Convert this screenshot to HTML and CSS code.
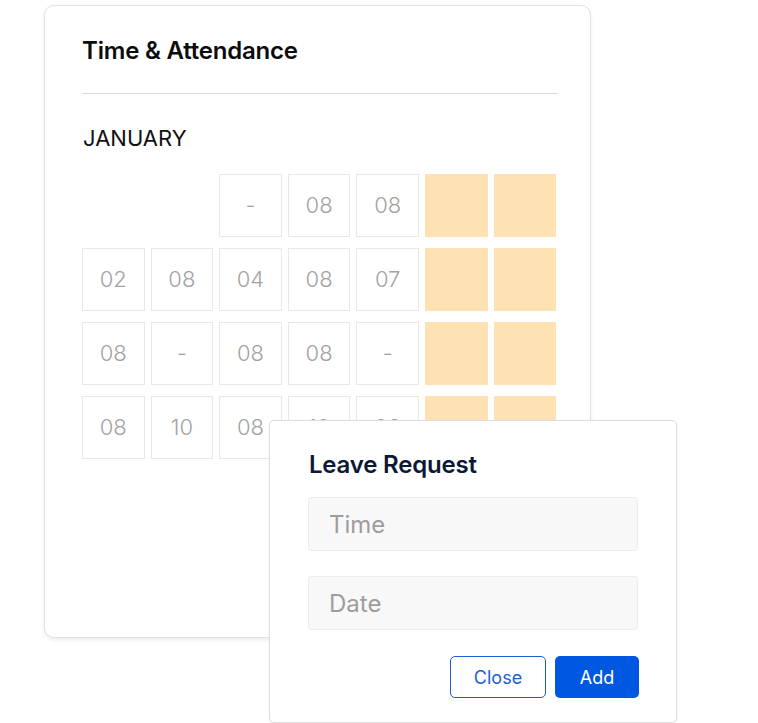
FILE: index.html
```html
<!DOCTYPE html>
<html>
<head>
<meta charset="utf-8">
<link rel="stylesheet" href="styles.css">
</head>
<body>
<div class="stage">
  <div class="card">
    <h2 class="card-title">Time &amp; Attendance</h2>
    <div class="divider"></div>
    <div class="month">JANUARY</div>
    <div class="grid">
      <div class="cell empty"></div><div class="cell empty"></div><div class="cell">-</div><div class="cell">08</div><div class="cell">08</div><div class="cell off"></div><div class="cell off"></div>
      <div class="cell">02</div><div class="cell">08</div><div class="cell">04</div><div class="cell">08</div><div class="cell">07</div><div class="cell off"></div><div class="cell off"></div>
      <div class="cell">08</div><div class="cell">-</div><div class="cell">08</div><div class="cell">08</div><div class="cell">-</div><div class="cell off"></div><div class="cell off"></div>
      <div class="cell">08</div><div class="cell">10</div><div class="cell">08</div><div class="cell">10</div><div class="cell">08</div><div class="cell off"></div><div class="cell off"></div>
    </div>
  </div>
  <div class="modal">
    <h3 class="modal-title">Leave Request</h3>
    <div class="field">Time</div>
    <div class="field">Date</div>
    <div class="actions">
      <button class="btn btn-outline">Close</button>
      <button class="btn btn-primary">Add</button>
    </div>
  </div>
</div>
</body>
</html>
```
FILE: styles.css
```css
* { box-sizing: border-box; }
html, body { margin: 0; padding: 0; background: #fff; }
body { font-family: Inter, "Noto Sans", sans-serif; width: 758px; height: 723px; overflow: hidden; }
.stage { position: relative; width: 758px; height: 723px; padding: 5px 0 0 44px; }
.card {
  width: 547px; height: 633px;
  border: 1px solid #e2e2e2; border-radius: 10px;
  box-shadow: 0 2px 4px rgba(0,0,0,0.08);
  padding: 31px 32px 0 37px;
  background: #fff;
}
.card-title { margin: 0; font-size: 24px; font-weight: 600; line-height: 28px; color: #0c0c0c; letter-spacing: -0.2px; }
.divider { height: 1px; background: #dcdcdc; margin-top: 28px; }
.month { margin-top: 31px; font-size: 22px; line-height: 26px; color: #111; font-weight: 400; margin-left: 1px; }
.grid {
  margin-top: 23px;
  display: grid;
  grid-template-columns: repeat(7, 62.6px);
  grid-auto-rows: 63px;
  column-gap: 6px; row-gap: 11px;
  width: 476px;
}
.cell {
  border: 1px solid #e8e8e8;
  display: flex; align-items: center; justify-content: center;
  font-size: 22px; color: #a3a3a3; font-weight: 300;
  padding-bottom: 2px;
}
.cell.empty { border: none; }
.cell.off { border: none; background: #fee2b3; }
.modal {
  position: absolute; left: 269px; top: 420px;
  width: 408px; height: 303px;
  background: #fff;
  border: 1px solid #dedede; border-radius: 5px;
  box-shadow: 0 1px 3px rgba(0,0,0,0.06);
  padding: 29px 38px 0 38px;
}
.modal-title { margin: 0; font-size: 24px; font-weight: 600; line-height: 30px; color: #0b1936; letter-spacing: -0.2px; margin-left: 1px; }
.field {
  width: 330px; height: 54px;
  background: #f8f8f8; border: 1px solid #ececec; border-radius: 3px;
  padding-left: 20px;
  display: flex; align-items: center;
  font-size: 24px; color: #9d9d9d;
  margin-top: 17px;
}
.field + .field { margin-top: 25px; }
.actions { display: flex; justify-content: flex-end; gap: 9px; margin-top: 26px; width: 331px; }
.btn { height: 42px; border-radius: 5px; font-family: Inter, "Noto Sans", sans-serif; font-size: 18px; cursor: pointer; }
.btn-outline { width: 96px; background: #fff; border: 1.5px solid #1a5fd1; color: #1a5fd1; }
.btn-primary { width: 84px; background: #0057e1; border: none; color: #fff; }
```
